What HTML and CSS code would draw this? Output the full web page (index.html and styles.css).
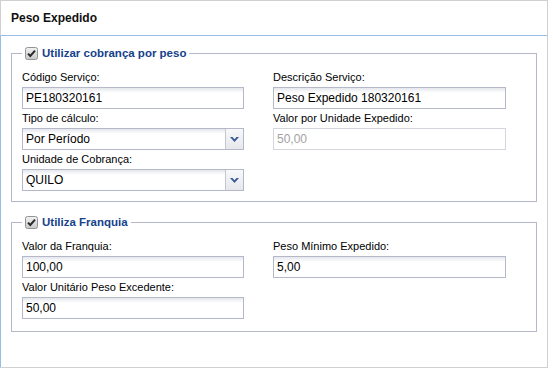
FILE: index.html
```html
<!DOCTYPE html>
<html lang="pt-BR">
<head>
    <meta charset="UTF-8">
    <title>Peso Expedido</title>
    <link rel="stylesheet" href="styles.css">
</head>
<body>
    <div class="panel">
        <div class="panel-header">Peso Expedido</div>
        <div class="panel-body">

            <fieldset class="group">
                <legend class="group-title">
                    <svg class="check" width="13" height="13" viewBox="0 0 13 13">
                        <defs>
                            <linearGradient id="cb1" x1="0" y1="0" x2="0" y2="1">
                                <stop offset="0" stop-color="#f2f2f2"/>
                                <stop offset="1" stop-color="#c9c9c9"/>
                            </linearGradient>
                        </defs>
                        <rect x="0.5" y="0.5" width="12" height="12" rx="2" fill="url(#cb1)" stroke="#949494"/>
                        <path d="M3 6.6 L5.3 9 L10 3.6" fill="none" stroke="#2b2b2b" stroke-width="2"/>
                    </svg>
                    Utilizar cobrança por peso
                </legend>
                <div class="cols">
                    <div class="col col-left">
                        <label class="field-label">Código Serviço:</label>
                        <input class="field" type="text" value="PE180320161">
                        <label class="field-label">Tipo de cálculo:</label>
                        <div class="combo">
                            <span class="combo-text">Por Período</span>
                            <span class="combo-trigger">
                                <svg width="9" height="5" viewBox="0 0 9 5"><path d="M0 0 H2.5 L4.5 2.2 L6.5 0 H9 L4.5 5 Z" fill="#3a5a96"/></svg>
                            </span>
                        </div>
                        <label class="field-label">Unidade de Cobrança:</label>
                        <div class="combo">
                            <span class="combo-text">QUILO</span>
                            <span class="combo-trigger">
                                <svg width="9" height="5" viewBox="0 0 9 5"><path d="M0 0 H2.5 L4.5 2.2 L6.5 0 H9 L4.5 5 Z" fill="#3a5a96"/></svg>
                            </span>
                        </div>
                    </div>
                    <div class="col col-right">
                        <label class="field-label">Descrição Serviço:</label>
                        <input class="field" type="text" value="Peso Expedido 180320161">
                        <label class="field-label">Valor por Unidade Expedido:</label>
                        <input class="field disabled" type="text" value="50,00" disabled>
                    </div>
                </div>
            </fieldset>

            <fieldset class="group group-second">
                <legend class="group-title">
                    <svg class="check" width="13" height="13" viewBox="0 0 13 13">
                        <defs>
                            <linearGradient id="cb2" x1="0" y1="0" x2="0" y2="1">
                                <stop offset="0" stop-color="#f2f2f2"/>
                                <stop offset="1" stop-color="#c9c9c9"/>
                            </linearGradient>
                        </defs>
                        <rect x="0.5" y="0.5" width="12" height="12" rx="2" fill="url(#cb2)" stroke="#949494"/>
                        <path d="M3 6.6 L5.3 9 L10 3.6" fill="none" stroke="#2b2b2b" stroke-width="2"/>
                    </svg>
                    Utiliza Franquia
                </legend>
                <div class="cols">
                    <div class="col col-left">
                        <label class="field-label">Valor da Franquia:</label>
                        <input class="field" type="text" value="100,00">
                        <label class="field-label">Valor Unitário Peso Excedente:</label>
                        <input class="field" type="text" value="50,00">
                    </div>
                    <div class="col col-right">
                        <label class="field-label">Peso Mínimo Expedido:</label>
                        <input class="field" type="text" value="5,00">
                    </div>
                </div>
            </fieldset>

        </div>
    </div>
</body>
</html>
```

FILE: styles.css
```css
body {
    margin: 0;
    background-color: #fff;
    font-family: "Liberation Sans", Arial, sans-serif;
    font-size: 12px;
    color: #000;
}

.panel {
    width: 548px;
    height: 368px;
    box-sizing: border-box;
    border-right: 1px solid #d0d0d0;
    border-bottom: 1px solid #d0d0d0;
    display: flex;
    flex-direction: column;
}

.panel-header {
    height: 34px;
    line-height: 34px;
    padding-left: 10px;
    border-top: 1px solid #d0d0d0;
    border-left: 1px solid #d0d0d0;
    border-bottom: 1px solid #99bbe8;
    font-size: 12px;
    font-weight: bold;
    color: #111;
}

.panel-body {
    flex: 1;
    border-left: 1px solid #99bbe8;
    padding: 9px 10px 0 10px;
}

.group {
    margin: 0;
    padding: 7px 10px 10px 10px;
    border: 1px solid #b5b8c8;
    min-width: 0;
}

.group-second {
    margin-top: 12px;
    padding-bottom: 12px;
}

.group-title {
    display: flex;
    align-items: center;
    gap: 4px;
    height: 16px;
    padding: 0 3px 0 3px;
    font-size: 11.5px;
    font-weight: bold;
    color: #15428b;
}

.check {
    display: block;
}

.cols {
    display: flex;
    gap: 29px;
}

.col {
    display: flex;
    flex-direction: column;
}

.col-left {
    width: 222px;
}

.col-right {
    width: 233px;
}

.field-label {
    display: block;
    height: 19px;
    line-height: 19px;
    font-size: 11px;
    white-space: nowrap;
}

.field {
    display: block;
    box-sizing: border-box;
    width: 100%;
    height: 22px;
    margin: 0;
    padding: 0 3px;
    border: 1px solid #b5b8c8;
    border-radius: 0;
    background: linear-gradient(to bottom, #e4e7ec 0, #fff 5px);
    font-family: inherit;
    font-size: 12px;
    color: #000;
    outline: none;
}

.field.disabled {
    border-color: #d3d6dc;
    background: #fff;
    color: #a3a3a3;
}

.combo {
    display: flex;
    box-sizing: border-box;
    height: 22px;
    border: 1px solid #b5b8c8;
    background: linear-gradient(to bottom, #e4e7ec 0, #fff 5px);
}

.combo-text {
    flex: 1;
    line-height: 20px;
    padding-left: 3px;
}

.combo-trigger {
    width: 17px;
    border-left: 1px solid #c4c7d2;
    background: linear-gradient(to bottom, #f7f8fa, #e6e8ec);
    display: flex;
    align-items: center;
    justify-content: center;
}

.combo-trigger svg {
    display: block;
}
```
